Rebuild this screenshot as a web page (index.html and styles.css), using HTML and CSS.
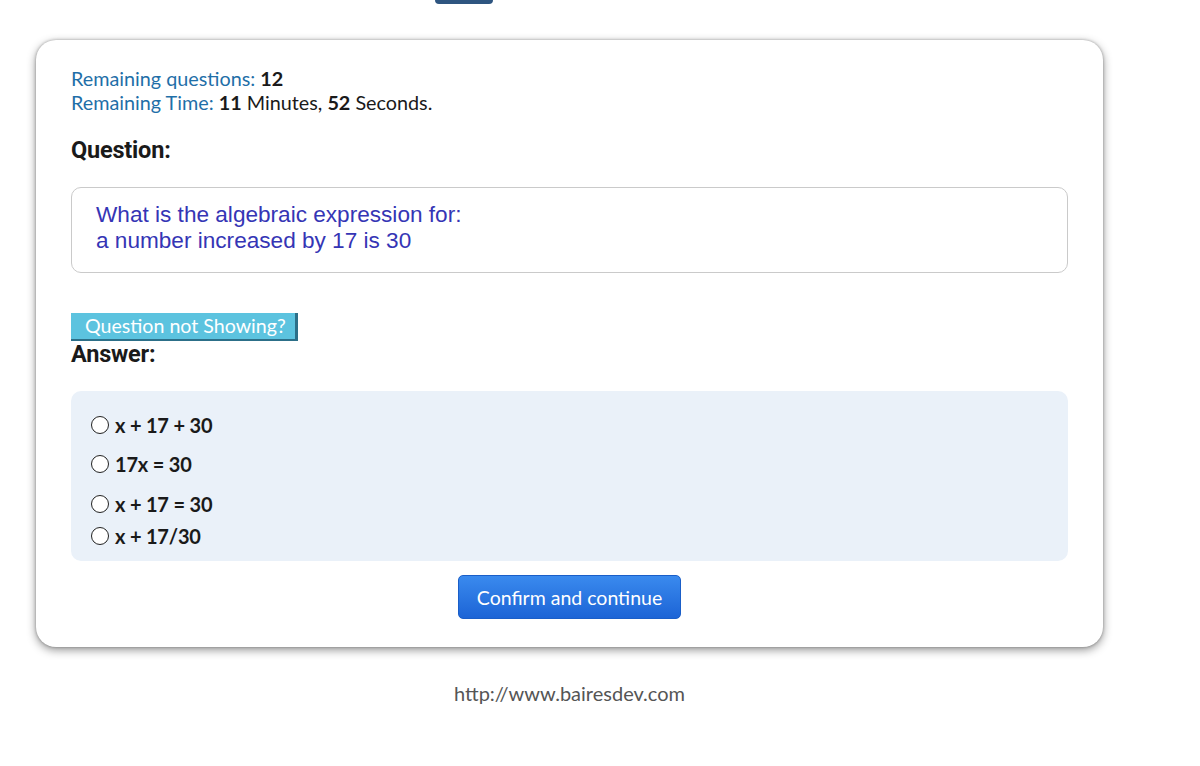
FILE: index.html
```html
<!DOCTYPE html>
<html>
<head>
<meta charset="utf-8">
<link rel="stylesheet" href="styles.css">
</head>
<body>
<div class="page">
  <div class="top-tab"></div>
  <div class="card">
    <div class="status">
      <div><span class="label">Remaining questions:</span> <b>12</b></div>
      <div><span class="label">Remaining Time:</span> <b>11</b> Minutes, <b>52</b> Seconds.</div>
    </div>
    <h2 class="heading q-heading">Question:</h2>
    <div class="question-box">
      <div>What is the algebraic expression for:</div>
      <div>a number increased by 17 is 30</div>
    </div>
    <button class="not-showing">Question not Showing?</button>
    <h2 class="heading a-heading">Answer:</h2>
    <div class="answers">
      <label class="option o1"><span class="radio"></span>x + 17 + 30</label>
      <label class="option o2"><span class="radio"></span>17x = 30</label>
      <label class="option o3"><span class="radio"></span>x + 17 = 30</label>
      <label class="option o4"><span class="radio"></span>x + 17/30</label>
    </div>
    <div class="actions">
      <button class="confirm">Confirm and continue</button>
    </div>
  </div>
  <div class="footer">http://www.bairesdev.com</div>
</div>
</body>
</html>
```

FILE: styles.css
```css
* { box-sizing: border-box; }
html, body { margin: 0; padding: 0; background: #fff; }
body { font-family: Lato, "Open Sans", sans-serif; color: #1a1a1a; }

.page {
  width: 1067px;
  margin-left: 36px;
  display: flex;
  flex-direction: column;
}

.top-tab {
  width: 58px;
  height: 4px;
  margin-left: 399px;
  background: #2e5580;
  border-radius: 0 0 6px 6px;
}

.card {
  margin-top: 36px;
  background: #fff;
  border-radius: 20px;
  box-shadow: 0 3px 10px rgba(0,0,0,0.42), 0 0 3px rgba(0,0,0,0.3);
  padding: 26px 35px 28px 35px;
  display: flex;
  flex-direction: column;
}

.status {
  font-size: 19.8px;
  line-height: 24px;
}
.status .label { color: #1f6fa8; }
.status b { font-weight: 700; color: #1a1a1a; }

.heading {
  font-family: Roboto, sans-serif;
  font-weight: 700;
  font-size: 23.5px;
  letter-spacing: -0.2px;
  margin: 0;
  line-height: 26px;
  color: #1a1a1a;
}
.q-heading { margin-top: 23px; }

.question-box {
  margin-top: 24px;
  border: 1px solid #cacaca;
  border-radius: 10px;
  padding: 14px 24px 18px 24px;
  height: 86px;
  font-family: "Liberation Sans", Arial, sans-serif;
  font-size: 22.6px;
  line-height: 26px;
  color: #3535b5;
}

.not-showing {
  align-self: flex-start;
  margin-top: 40px;
  width: 227px;
  height: 28px;
  padding: 0 0 0 14px;
  text-align: left;
  background: #5cc3df;
  border: none;
  border-right: 3px solid #2c6f88;
  border-bottom: 2px solid #2c6f88;
  color: #fff;
  font-family: Lato, sans-serif;
  font-size: 19.6px;
  line-height: 26px;
}

.a-heading { margin-top: 0; }

.answers {
  margin-top: 24px;
  background: #eaf1f9;
  border-radius: 10px;
  height: 170px;
  padding: 21px 20px 0 20px;
  display: flex;
  flex-direction: column;
}
.option {
  display: flex;
  align-items: center;
  gap: 6px;
  font-size: 20px;
  font-weight: 700;
  line-height: 26px;
  color: #1a1a1a;
  letter-spacing: -0.2px;
}
.o2 { margin-top: 13px; }
.o3 { margin-top: 14px; }
.o4 { margin-top: 6px; }
.radio {
  width: 18px;
  height: 18px;
  border: 1.6px solid #222;
  border-radius: 50%;
  background: #fff;
  flex: none;
}

.actions {
  display: flex;
  justify-content: center;
  margin-top: 14px;
}
.confirm {
  width: 223px;
  height: 44px;
  border: 1px solid #1a5ec8;
  border-radius: 5px;
  background: linear-gradient(#3a8aee, #1c64d6);
  color: #fff;
  font-family: Lato, sans-serif;
  font-size: 19.5px;
  padding: 0;
}

.footer {
  margin-top: 34px;
  text-align: center;
  font-size: 20px;
  color: #555;
  line-height: 24px;
}
```
